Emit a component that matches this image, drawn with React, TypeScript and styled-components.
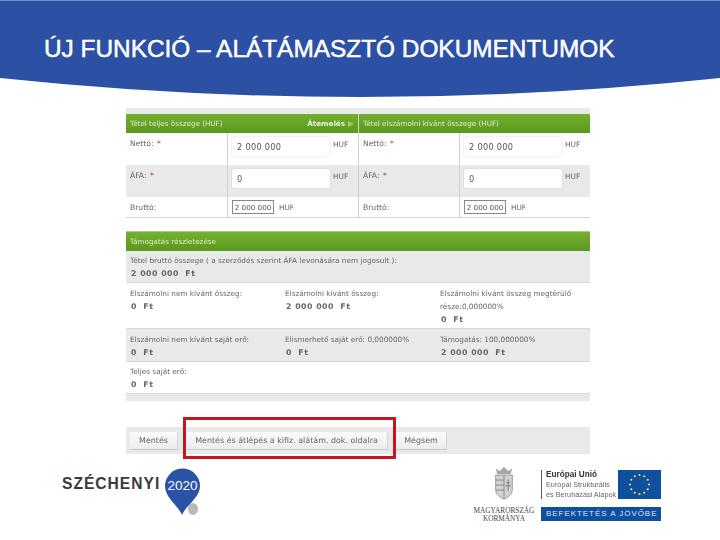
import React from "react";
import styled, { createGlobalStyle } from "styled-components";

const Global = createGlobalStyle`
  html, body { margin: 0; padding: 0; background: #fff; }
  * { box-sizing: border-box; }
`;
const Page = styled.div`
  width: 720px; height: 540px; overflow: hidden; background: #fff;
  display: flex; flex-direction: column;
  font-family: "DejaVu Sans", sans-serif;
`;
const Banner = styled.header`
  height: 97px; flex: none; background: #2c50a3; border-top: 1px solid #6c8fd6;
  clip-path: path("M0 0H720V78Q360 116 0 78Z");
  padding: 33px 0 0 44px;
`;
const Title = styled.h1`
  margin: 0; font: 400 24.4px/30px "Liberation Sans", sans-serif; color: #fff; white-space: nowrap;
  -webkit-text-stroke: 0.5px #fff;
`;
const Screens = styled.main`
  width: 464px; margin: 11px 0 0 126px; display: flex; flex-direction: column;
  font-size: 7.3px; color: #666; filter: blur(0.4px);
`;
const TopBand = styled.div` height: 6px; background: #e9e9e9; `;
const Split = styled.div`
  display: grid; grid-template-columns: 232px 232px;
  border-bottom: 1px solid #d4d4d4;
`;
const Block = styled.section`
  display: grid; grid-template-columns: 102px 130px; grid-template-rows: 19px 32px 32px 20px;
  & + & { border-left: 1px solid #d0d0d0; grid-template-columns: 101px 130px; }
`;
const GreenHead = styled.div`
  background: linear-gradient(#74b12f, #5b971f); color: #dcebc6; height: 19px;
  display: flex; align-items: center; justify-content: space-between; padding: 0 4px;
  font-size: 7.2px; white-space: nowrap;
`;
const BlockHead = styled(GreenHead)` grid-column: 1 / 3; `;
const Forward = styled.span`
  display: flex; align-items: center; gap: 3px; font-weight: 700; color: #e6f0d8;
  &::after {
    content: ""; border-left: 6px solid #9ad45a; border-top: 3.5px solid transparent; border-bottom: 3.5px solid transparent;
  }
`;
const Label = styled.div<{ $gray?: boolean }>`
  background: ${(p) => (p.$gray ? "#e8e9e9" : "#fff")};
  padding: 6px 4px 0;
  border-right: 1px solid #d0d0d0;
  font-size: 7.6px;
`;
const Star = styled.span` color: #b4405a; margin-left: 1px; `;
const Field = styled.div<{ $gray?: boolean }>`
  background: ${(p) => (p.$gray ? "#e8e9e9" : "#fff")};
  padding: 4px 0 0 4px; display: flex; align-items: flex-start; gap: 3px;
`;
const Input = styled.div`
  width: 98px; height: 19px; background: #fff; border-radius: 2px;
  box-shadow: 0 0 1.5px #bdbdbd; display: flex; align-items: center; padding-left: 5px;
  font-size: 8.2px; letter-spacing: 0.3px; color: #555;
`;
const Unit = styled.span` font-size: 7.4px; margin-top: 3px; `;
const Total = styled.div`
  width: 42px; height: 14px; border: 1px solid #888; background: #fff;
  display: flex; align-items: center; justify-content: center;
  font-size: 7.2px; color: #555; white-space: nowrap;
`;
const TotalField = styled(Field)` padding: 3px 0 0 4px; gap: 5px; align-items: flex-start; align-self: stretch; `;
const TotalUnit = styled.span` margin-top: 3px; `;
const Panel = styled.section`
  margin-top: 13px; display: flex; flex-direction: column; border-top: 1px solid #a9cf7c;
`;
const Row = styled.div<{ $gray?: boolean; $h: number; $top: number }>`
  height: ${(p) => p.$h}px; background: ${(p) => (p.$gray ? "#e8e9e9" : "#fff")};
  border-bottom: 1px solid #d8d8d8;
  display: grid; grid-template-columns: 155px 155px 154px; padding: ${(p) => p.$top}px 4px 0;
`;
const WideRow = styled(Row)` display: block; `;
const Cell = styled.div` line-height: 13px; font-size: 7.3px; white-space: nowrap; `;
const Amount = styled.div`
  line-height: 13px; font-size: 7.8px; font-weight: 700; color: #666; padding-left: 1px; letter-spacing: 0.5px;
`;
const Bottom = styled.div` height: 7px; background: #e8e9e9; `;
const Toolbar = styled.nav`
  margin-top: 26px; height: 27px; background: #e8e9e9; display: flex; align-items: center; gap: 8px; padding-left: 4px;
`;
const Btn = styled.div<{ $w: number }>`
  width: ${(p) => p.$w}px; height: 18px; background: linear-gradient(#fbfbfb, #ececec);
  border-bottom: 1px solid #c9c9c9; border-right: 1px solid #d5d5d5;
  display: flex; align-items: center; justify-content: center; font-size: 7.95px; color: #666; white-space: nowrap;
`;
const Marked = styled.div`
  position: relative;
  &::after {
    content: ""; position: absolute; left: -3px; right: -8px; top: -15px; bottom: -9px;
    border: 3px solid #c8141e;
  }
`;
const Footer = styled.footer`
  margin-top: 14px; height: 60px; display: flex; padding-left: 62px;
`;
const Sz = styled.div`
  display: flex; align-items: flex-start; gap: 4px; width: 408px;
`;
const SzName = styled.span`
  font: 700 15.6px/18px "Liberation Sans", sans-serif; color: #3a3a3c; letter-spacing: 1px; margin-top: 7px; width: 98px; white-space: nowrap;
`;
const PinBox = styled.svg` width: 38px; height: 50px; display: block; flex: none; `;
const Gov = styled.div`
  width: 68px; display: flex; flex-direction: column; align-items: center; margin-top: -3px;
`;
const Crest = styled.svg` width: 20px; height: 36px; display: block; filter: blur(0.4px); `;
const GovName = styled.div`
  font: 400 7.3px/8px "Liberation Serif", serif; text-align: center; color: #444; margin-top: 6px; white-space: nowrap;
`;
const Eu = styled.div` width: 120px; margin: 2px 0 0 3px; display: flex; flex-direction: column; gap: 8px; `;
const EuTop = styled.div` display: flex; height: 29px; justify-content: space-between; `;
const EuText = styled.div`
  border-left: 1px solid #555; padding-left: 4px; font: 400 7.3px/10px "Liberation Sans", sans-serif; color: #666; white-space: nowrap; filter: blur(0.3px);
`;
const EuStrong = styled.div` font-weight: 700; font-size: 8.2px; color: #333; `;
const Flag = styled.svg` width: 43px; height: 29px; display: block; `;
const Invest = styled.div`
  height: 14px; background: #0f4fa0; color: #d8e4f4; font: 400 8px/14px "Liberation Sans", sans-serif;
  letter-spacing: 0.95px; padding-left: 5px; white-space: nowrap; overflow: hidden;
`;

const stars = Array.from({ length: 12 }, (_, i) => {
  const a = (i * Math.PI) / 6;
  return { x: 21.5 + 9.5 * Math.cos(a), y: 14.5 + 9.5 * Math.sin(a) };
});

const Money = ({ title, head }: { title: string; head?: boolean }) => (
  <Block>
    <BlockHead>
      <span>{title}</span>
      {head && <Forward>Átemelés</Forward>}
    </BlockHead>
    <Label>Nettó: <Star>*</Star></Label>
    <Field><Input>2 000 000</Input><Unit>HUF</Unit></Field>
    <Label $gray>ÁFA: <Star>*</Star></Label>
    <Field $gray><Input>0</Input><Unit>HUF</Unit></Field>
    <Label>Bruttó:</Label>
    <TotalField><Total>2 000 000</Total><TotalUnit>HUF</TotalUnit></TotalField>
  </Block>
);

export default function App() {
  return (
    <Page>
      <Global />
      <Banner><Title>ÚJ FUNKCIÓ – ALÁTÁMASZTÓ DOKUMENTUMOK</Title></Banner>
      <Screens>
        <TopBand />
        <Split>
          <Money title="Tétel teljes összege (HUF)" head />
          <Money title="Tétel elszámolni kívánt összege (HUF)" />
        </Split>
        <Panel>
          <GreenHead>Támogatás részletezése</GreenHead>
          <WideRow $gray $h={32} $top={3}>
            <Cell>Tétel bruttó összege ( a szerződés szerint ÁFA levonására nem jogosult ):</Cell>
            <Amount>2 000 000 &nbsp;Ft</Amount>
          </WideRow>
          <Row $h={46} $top={4}>
            <div><Cell>Elszámolni nem kívánt összeg:</Cell><Amount>0 &nbsp;Ft</Amount></div>
            <div><Cell>Elszámolni kívánt összeg:</Cell><Amount>2 000 000 &nbsp;Ft</Amount></div>
            <div><Cell>Elszámolni kívánt összeg megtérülő</Cell><Cell>része:0,000000%</Cell><Amount>0 &nbsp;Ft</Amount></div>
          </Row>
          <Row $gray $h={33} $top={4}>
            <div><Cell>Elszámolni nem kívánt saját erő:</Cell><Amount>0 &nbsp;Ft</Amount></div>
            <div><Cell>Elismerhető saját erő: 0,000000%</Cell><Amount>0 &nbsp;Ft</Amount></div>
            <div><Cell>Támogatás: 100,000000%</Cell><Amount>2 000 000 &nbsp;Ft</Amount></div>
          </Row>
          <Row $h={32} $top={3}>
            <div><Cell>Teljes saját erő:</Cell><Amount>0 &nbsp;Ft</Amount></div>
          </Row>
          <Bottom />
        </Panel>
        <Toolbar>
          <Btn $w={48}>Mentés</Btn>
          <Marked><Btn $w={202}>Mentés és átlépés a kifiz. alátám. dok. oldalra</Btn></Marked>
          <Btn $w={51}>Mégsem</Btn>
        </Toolbar>
      </Screens>
      <Footer>
        <Sz>
          <SzName>SZÉCHENYI</SzName>
          <PinBox viewBox="0 0 38 50">
            <ellipse cx="29" cy="41" rx="5" ry="6" fill="#b9b9bb" />
            <path d="M18 47C14 37 1 30 1 18A17.5 17.5 0 0 1 36 18C36 30 22 37 18 47Z" fill="#2a52a5" />
            <text x="18.5" y="22" textAnchor="middle" fontFamily="Liberation Sans" fontSize="13.5" fill="#fff">2020</text>
          </PinBox>
        </Sz>
        <Gov>
          <Crest viewBox="0 0 24 41">
            <path d="M4 10L2 3 7 6 12 1 17 6 22 3 20 10Z" fill="#a9a9a9" />
            <path d="M2 11H22V28C22 35 16 38 12 40 8 38 2 35 2 28Z" fill="#d2d2d2" stroke="#8f8f8f" />
            <path d="M12 11V39M2 17H12M2 23H12M2 29H12" stroke="#8a8a8a" strokeWidth="1.2" />
            <path d="M15 20H19M17 16V30M14 24H20" stroke="#8a8a8a" strokeWidth="1.4" />
          </Crest>
          <GovName>MAGYARORSZÁG<br />KORMÁNYA</GovName>
        </Gov>
        <Eu>
          <EuTop>
            <EuText>
              <EuStrong>Európai Unió</EuStrong>
              Európai Strukturális<br />és Beruházási Alapok
            </EuText>
            <Flag viewBox="0 0 43 29">
              <rect width="43" height="29" fill="#0f4fa0" />
              {stars.map((s, i) => <circle key={i} cx={s.x} cy={s.y} r="1.1" fill="#f5d94a" />)}
            </Flag>
          </EuTop>
          <Invest>BEFEKTETÉS A JÖVŐBE</Invest>
        </Eu>
      </Footer>
    </Page>
  );
}
